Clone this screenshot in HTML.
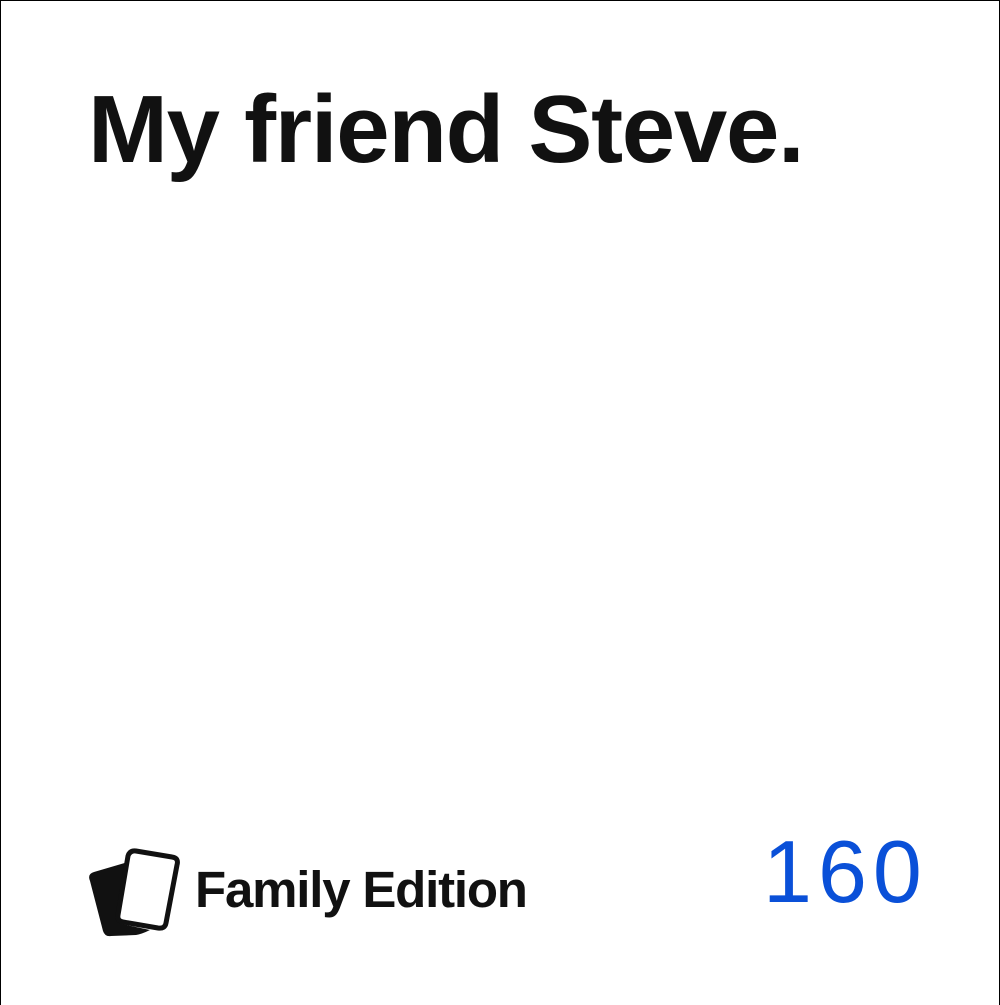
<!DOCTYPE html>
<html><head><style>
html,body{margin:0;padding:0;width:1000px;height:1005px;overflow:hidden;}
body{position:relative;background:#fff;font-family:"Liberation Sans",sans-serif;}
.frame{position:absolute;left:0;top:0;width:998px;height:1004px;border:1px solid #000;border-bottom:none;}
.title{position:absolute;left:88px;top:75px;font-size:96px;font-weight:bold;color:#111;letter-spacing:-1.3px;line-height:1.15;white-space:nowrap;}
.fe{position:absolute;left:195px;top:861px;font-size:51px;font-weight:bold;color:#111;letter-spacing:-1.2px;line-height:1.15;white-space:nowrap;}
.num{position:absolute;left:763px;top:821px;font-size:88px;color:#0a50d8;letter-spacing:6px;line-height:1.15;white-space:nowrap;}
svg{position:absolute;left:86px;top:848px;}
</style></head><body>
<div class="frame"></div>
<div class="title">My friend Steve.</div>
<svg width="96" height="92" viewBox="0 0 96 92">
  <path d="M4 33 Q1 26 8 24 L42 14 L36 76 L64 82 Q56 86 50 87 L25 88 Q19 89 17 83 Z" fill="#111"/>
  <path d="M42 8 Q44 2 50 3 L86 9 Q93 10 91 17 L80 75 Q79 81 72 80 L37 74 Q31 73 32 67 Z" fill="#fff" stroke="#111" stroke-width="5" stroke-linejoin="round"/>
</svg>
<div class="fe">Family Edition</div>
<div class="num">160</div>
</body></html>
